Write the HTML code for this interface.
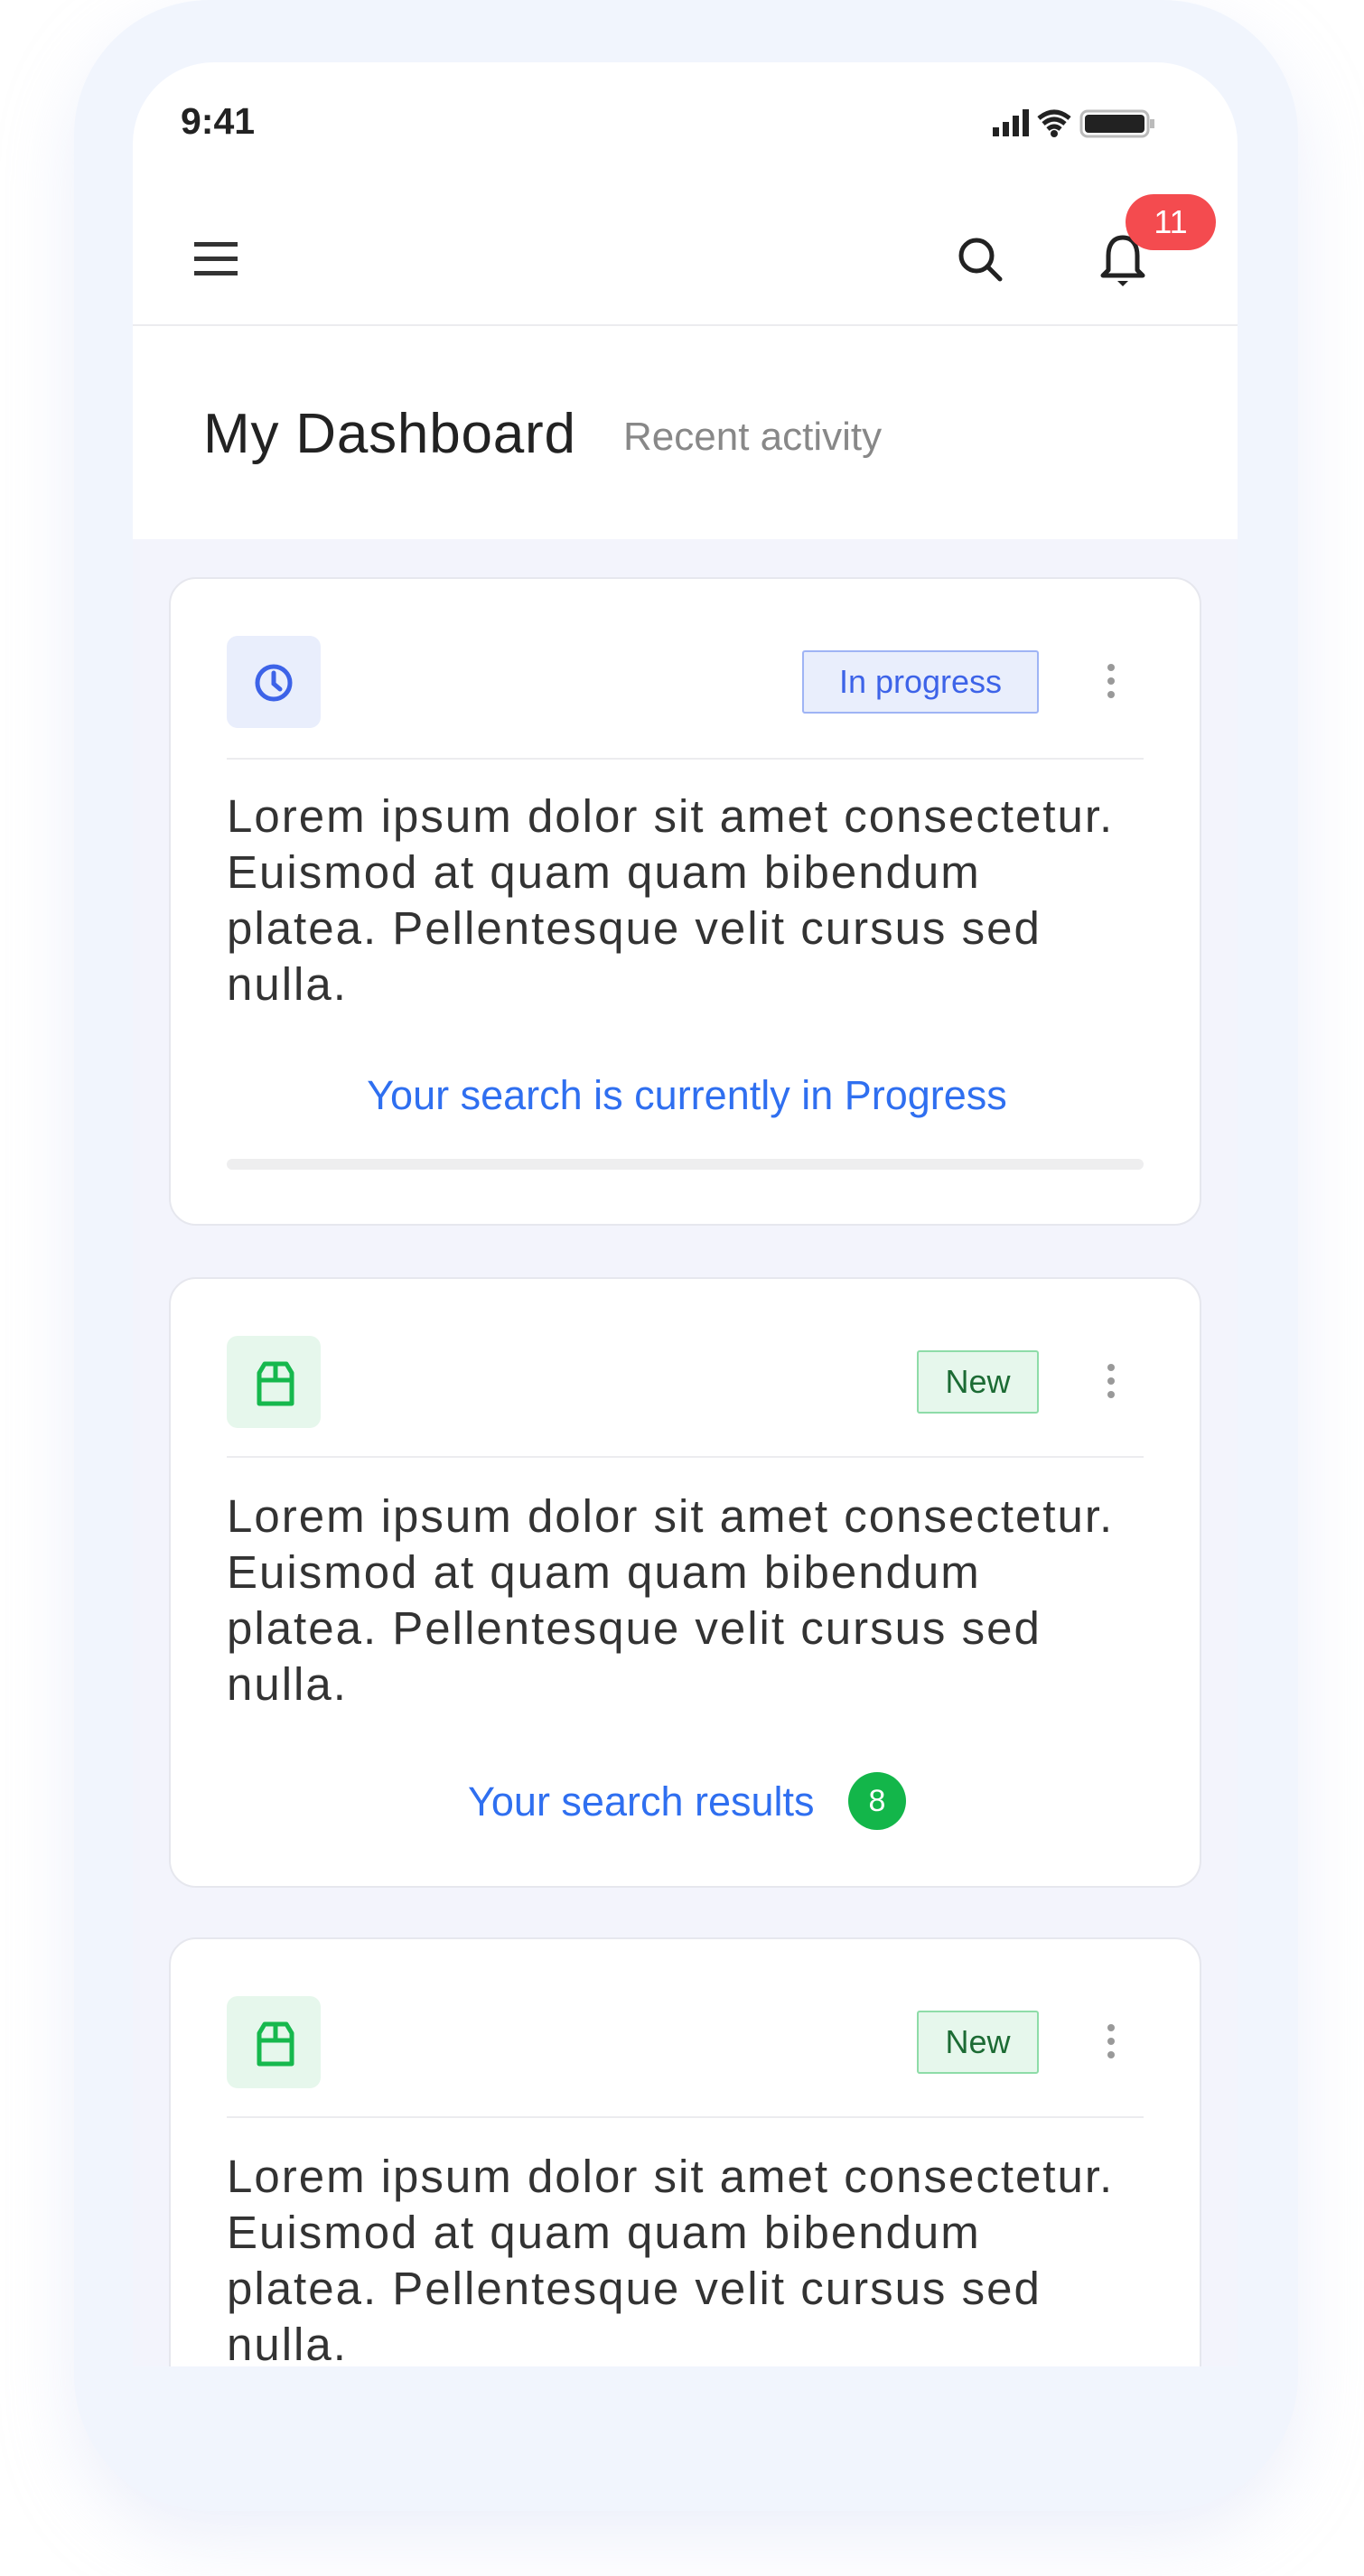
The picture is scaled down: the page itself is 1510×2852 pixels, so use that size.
<!DOCTYPE html>
<html><head><meta charset="utf-8"><style>
*{margin:0;padding:0;box-sizing:border-box}
body{width:1510px;height:2852px;background:#fff;font-family:"Liberation Sans",sans-serif;position:relative;overflow:hidden}
.abs{position:absolute}
.frame{left:82px;top:0;width:1355px;height:2780px;border-radius:150px;background:#f1f5fd;box-shadow:0 30px 80px rgba(200,210,240,.35)}
.screen{left:147px;top:69px;width:1223px;height:2551px;border-radius:90px 90px 0 0;background:#f3f4fc;overflow:hidden}
.hdr{left:0;top:0;width:1223px;height:528px;background:#fff}
.card{left:40px;width:1143px;background:#fff;border:2px solid #e6e7ee;border-radius:30px}
.ibox{left:62px;width:104px;height:102px;border-radius:12px}
.badge{height:70px;border:2px solid;border-radius:3px;font-size:36px;line-height:66px;text-align:center}
.dots{width:8px}
.dots i{display:block;width:8px;height:8px;border-radius:50%;background:#999;margin-bottom:7px}
.div{left:62px;width:1015px;height:2px;background:#ececef}
.txt{left:62px;width:1070px;font-size:51px;line-height:62px;color:#333;letter-spacing:2px;white-space:nowrap}
.link{color:#2f6ff0;font-size:45px;text-align:center}
</style></head><body>
<div class="abs frame"></div>
<div class="abs screen">
 <div class="abs hdr">
  <div class="abs" style="left:53px;top:42px;font-size:41px;color:#222;font-weight:bold">9:41</div>
  <svg class="abs" style="left:950px;top:46px" width="200" height="40" viewBox="0 0 200 40">
   <rect x="2" y="26" width="7" height="10" fill="#222"/><rect x="13" y="20" width="7" height="16" fill="#222"/><rect x="24" y="13" width="7" height="23" fill="#222"/><rect x="35" y="6" width="7" height="30" fill="#222"/>
   <path d="M53 16 Q70 2 87 16 M58 22 Q70 12 82 22 M63 28 Q70 22 77 28" stroke="#222" stroke-width="5" fill="none"/><circle cx="70" cy="33" r="4" fill="#222"/>
   <rect x="100" y="8" width="74" height="28" rx="7" fill="none" stroke="#bbb" stroke-width="3"/><rect x="104" y="12" width="66" height="20" rx="4" fill="#222"/><rect x="176" y="17" width="5" height="10" fill="#bbb"/>
  </svg>
  <svg class="abs" style="left:68px;top:196px" width="50" height="44"><rect x="0" y="3" width="48" height="5" fill="#333"/><rect x="0" y="19" width="48" height="5" fill="#333"/><rect x="0" y="35" width="48" height="5" fill="#333"/></svg>
  <svg class="abs" style="left:910px;top:190px" width="60" height="60" viewBox="0 0 60 60"><circle cx="24" cy="24" r="17" stroke="#222" stroke-width="5" fill="none"/><path d="M36 36 L50 50" stroke="#222" stroke-width="5" stroke-linecap="round"/></svg>
  <svg class="abs" style="left:1068px;top:188px" width="56" height="64" viewBox="0 0 56 64"><path d="M28 6 C16 6 12 16 12 26 L12 42 L6 48 L50 48 L44 42 L44 26 C44 16 40 6 28 6 Z" stroke="#222" stroke-width="5" fill="none" stroke-linejoin="round"/><path d="M22 54 L34 54 L28 60 Z" fill="#222"/></svg>
  <div class="abs" style="left:1099px;top:146px;width:100px;height:62px;border-radius:31px;background:#f44b4f;color:#fff;font-size:36px;line-height:62px;text-align:center">11</div>
  <div class="abs" style="left:0;top:290px;width:1223px;height:2px;background:#ececef"></div>
  <div class="abs" style="left:78px;top:376px;font-size:62px;color:#222;letter-spacing:0.8px">My Dashboard</div>
  <div class="abs" style="left:543px;top:390px;font-size:44px;color:#888">Recent activity</div>
 </div>

 <div class="abs card" style="top:570px;height:718px">
  <div class="abs ibox" style="top:63px;background:#e9eefc"></div>
  <svg class="abs" style="left:92px;top:93px" width="44" height="44" viewBox="0 0 44 44"><circle cx="22" cy="22" r="18" stroke="#3d63e8" stroke-width="5" fill="none"/><path d="M22 11 L22 23 L29 29" stroke="#3d63e8" stroke-width="5" fill="none" stroke-linecap="round"/></svg>
  <div class="abs badge" style="left:699px;top:79px;width:262px;border-color:#9fb4f5;background:#e9eefc;color:#3d63e8">In progress</div>
  <div class="abs dots" style="left:1037px;top:94px"><i></i><i></i><i></i></div>
  <div class="abs div" style="top:198px"></div>
  <div class="abs txt" style="top:232px">Lorem ipsum dolor sit amet consectetur.<br>Euismod at quam quam bibendum<br>platea. Pellentesque velit cursus sed<br>nulla.</div>
  <div class="abs link" style="left:0;width:1143px;top:546px">Your search is currently in Progress</div>
  <div class="abs" style="left:62px;top:642px;width:1015px;height:12px;border-radius:6px;background:#eeeeef"></div>
 </div>

 <div class="abs card" style="top:1345px;height:676px">
  <div class="abs ibox" style="top:63px;background:#e6f7ec"></div>
  <svg class="abs" style="left:94px;top:90px" width="44" height="54" viewBox="0 0 44 54"><path d="M4 14 L10 4 L34 4 L40 14 L40 48 L4 48 Z M4 22 L40 22 M22 4 L22 22" stroke="#16b84d" stroke-width="5" fill="none" stroke-linejoin="round"/></svg>
  <div class="abs badge" style="left:826px;top:79px;width:135px;border-color:#8edca8;background:#e6f7ec;color:#1c6b34">New</div>
  <div class="abs dots" style="left:1037px;top:94px"><i></i><i></i><i></i></div>
  <div class="abs div" style="top:196px"></div>
  <div class="abs txt" style="top:232px">Lorem ipsum dolor sit amet consectetur.<br>Euismod at quam quam bibendum<br>platea. Pellentesque velit cursus sed<br>nulla.</div>
  <div class="abs link" style="left:329px;top:553px;text-align:left">Your search results</div>
  <div class="abs" style="left:750px;top:546px;width:64px;height:64px;border-radius:50%;background:#13b64a;color:#fff;font-size:34px;line-height:64px;text-align:center">8</div>
 </div>

 <div class="abs card" style="top:2076px;height:600px">
  <div class="abs ibox" style="top:63px;background:#e6f7ec"></div>
  <svg class="abs" style="left:94px;top:90px" width="44" height="54" viewBox="0 0 44 54"><path d="M4 14 L10 4 L34 4 L40 14 L40 48 L4 48 Z M4 22 L40 22 M22 4 L22 22" stroke="#16b84d" stroke-width="5" fill="none" stroke-linejoin="round"/></svg>
  <div class="abs badge" style="left:826px;top:79px;width:135px;border-color:#8edca8;background:#e6f7ec;color:#1c6b34">New</div>
  <div class="abs dots" style="left:1037px;top:94px"><i></i><i></i><i></i></div>
  <div class="abs div" style="top:196px"></div>
  <div class="abs txt" style="top:232px">Lorem ipsum dolor sit amet consectetur.<br>Euismod at quam quam bibendum<br>platea. Pellentesque velit cursus sed<br>nulla.</div>
 </div>
</div>
</body></html>
